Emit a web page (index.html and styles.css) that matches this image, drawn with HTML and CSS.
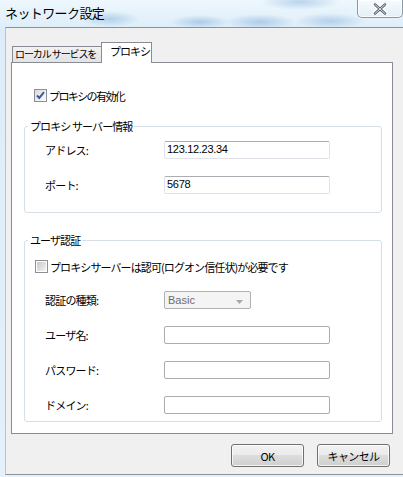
FILE: index.html
```html
<!DOCTYPE html>
<html lang="ja">
<head>
<meta charset="utf-8">
<link rel="stylesheet" href="styles.css">
</head>
<body>
<div class="window">
  <div class="titlebar">
    <div class="title">ネットワーク設定</div>
    <div class="close">
      <svg width="18" height="12" viewBox="0 0 18 12">
        <path d="M4 1.5 L14 10.5 M14 1.5 L4 10.5" stroke="#ffffff" stroke-width="5" stroke-linecap="round"/>
        <path d="M4 1.5 L14 10.5 M14 1.5 L4 10.5" stroke="#5a6470" stroke-width="2.6" stroke-linecap="round"/>
        <path d="M4 1.5 L14 10.5 M14 1.5 L4 10.5" stroke="#e8ecf0" stroke-width="0.9" stroke-linecap="round"/>
      </svg>
    </div>
  </div>
  <div class="client">
    <div class="tabs">
      <div class="tab">ローカル サービスを</div>
      <div class="tab active">プロキシ</div>
    </div>
    <div class="panel">
      <label class="check top-check">
        <svg class="box" width="13" height="13" viewBox="0 0 13 13">
          <defs><linearGradient id="g1" x1="0" y1="0" x2="1" y2="1"><stop offset="0" stop-color="#d8d8d8"/><stop offset="1" stop-color="#ffffff"/></linearGradient></defs>
          <rect x="0.5" y="0.5" width="12" height="12" fill="url(#g1)" stroke="#8a8f98"/>
          <path d="M3 6.5 L5.3 9 L10 3.2" fill="none" stroke="#3f5aa0" stroke-width="2"/>
        </svg>
        <span>プロキシの有効化</span>
      </label>
      <fieldset class="group g1">
        <legend>プロキシ サーバー情報</legend>
        <div class="row"><span class="lbl">アドレス:</span><div class="input">123.12.23.34</div></div>
        <div class="row"><span class="lbl">ポート:</span><div class="input">5678</div></div>
      </fieldset>
      <fieldset class="group g2">
        <legend>ユーザ認証</legend>
        <label class="check inner-check">
          <svg class="box" width="13" height="13" viewBox="0 0 13 13">
            <defs><linearGradient id="g2" x1="0" y1="0" x2="1" y2="1"><stop offset="0" stop-color="#c8c8c8"/><stop offset="1" stop-color="#f4f4f4"/></linearGradient></defs>
            <rect x="0.5" y="0.5" width="12" height="12" fill="#ffffff" stroke="#8a8f98"/>
            <rect x="2" y="2" width="9" height="9" fill="url(#g2)"/>
          </svg>
          <span>プロキシサーバーは認可(ログオン信任状)が必要です</span>
        </label>
        <div class="row"><span class="lbl">認証の種類:</span>
          <div class="select">Basic
            <svg class="arrow" width="7" height="4" viewBox="0 0 7 4"><path d="M0 0 H7 L3.5 4 Z" fill="#a8a8a8"/></svg>
          </div>
        </div>
        <div class="row"><span class="lbl">ユーザ名:</span><div class="input plain"></div></div>
        <div class="row"><span class="lbl">パスワード:</span><div class="input plain"></div></div>
        <div class="row"><span class="lbl">ドメイン:</span><div class="input plain"></div></div>
      </fieldset>
    </div>
    <div class="footer">
      <button class="btn">OK</button>
      <button class="btn">キャンセル</button>
    </div>
  </div>
</div>
</body>
</html>
```
FILE: styles.css
```css
* { box-sizing: border-box; }
html, body {
  margin: 0;
  padding: 0;
}
body {
  width: 403px;
  height: 477px;
  overflow: hidden;
  background: #e2f1fb;
  font-family: "Noto Sans CJK JP", "Noto Sans", sans-serif;
  font-size: 11px;
  color: #000;
}
.window {
  display: flex;
  flex-direction: column;
  height: 477px;
  background:
    radial-gradient(ellipse 30px 8px at 110px 19px, rgba(120,170,215,0.45), rgba(120,170,215,0)),
    radial-gradient(ellipse 30px 7px at 200px 22px, rgba(110,160,210,0.45), rgba(110,160,210,0)),
    radial-gradient(ellipse 35px 8px at 260px 22px, rgba(110,160,210,0.45), rgba(110,160,210,0)),
    radial-gradient(ellipse 35px 8px at 330px 21px, rgba(110,160,210,0.4), rgba(110,160,210,0)),
    radial-gradient(ellipse 40px 8px at 300px 2px, rgba(120,170,215,0.45), rgba(120,170,215,0)),
    linear-gradient(#eef7fd, #dcedf9 30px, #e2f1fb);
}
.titlebar {
  height: 27px;
  display: flex;
  justify-content: space-between;
  align-items: flex-start;
  flex-shrink: 0;
}
.title {
  font-size: 13px;
  line-height: 16px;
  padding: 5px 0 0 5px;
  letter-spacing: -0.6px;
  color: #000;
}
.close {
  width: 46px;
  height: 18px;
  border: 1px solid #8b97a5;
  border-top: none;
  border-radius: 0 0 5px 5px;
  background: linear-gradient(rgba(255,255,255,0.5), rgba(225,236,246,0.5));
  display: flex;
  align-items: center;
  justify-content: center;
  box-shadow: inset 0 0 0 1px rgba(255,255,255,0.7);
}
.client {
  margin-left: 5px;
  height: 448px;
  background: #f0f0f0;
  border-top: 1px solid #8e9296;
  border-left: 1px solid #b9c4cf;
  border-bottom: 1px solid #8e9296;
  padding: 14px 0 0 5px;
  display: flex;
  flex-direction: column;
}
.tabs {
  display: flex;
  align-items: flex-end;
  height: 20px;
  padding-left: 1px;
  position: relative;
  z-index: 1;
}
.tab {
  height: 16px;
  line-height: 14px;
  padding: 0 0 0 2px;
  border: 1px solid #898c95;
  border-bottom: none;
  background: linear-gradient(#f2f2f2, #e3e3e3);
  font-size: 10px;
  letter-spacing: -1.1px;
  white-space: nowrap;
  width: 90px;
  overflow: hidden;
}
.tab.active {
  height: 21px;
  width: 51px;
  background: #fff;
  margin-left: -1px;
  margin-bottom: -1px;
  padding: 1px 0 0 8px;
  line-height: 14px;
  font-size: 11px;
  letter-spacing: -1px;
}
.panel {
  width: 382px;
  height: 372px;
  background: #fff;
  border: 1px solid #898c95;
  padding: 26px 10px 0 12px;
  display: flex;
  flex-direction: column;
}
.check {
  display: flex;
  align-items: center;
  gap: 2px;
  height: 13px;
  white-space: nowrap;
  letter-spacing: -0.9px;
}
.top-check { letter-spacing: -1.6px; }
.check .box { flex-shrink: 0; }
.top-check { margin-left: 10px; }
.group {
  margin: 0;
  padding: 0;
  border: 1px solid #d5dfe5;
  border-radius: 3px;
  min-width: 0;
}
.group legend {
  margin-left: 3px;
  padding: 0 2px 0 2px;
  line-height: 12px;
  letter-spacing: -0.9px;
  white-space: nowrap;
}
.g1 {
  margin-top: 18px;
  padding: 9px 0 18px 0;
  display: flex;
  flex-direction: column;
  gap: 17px;
  height: 93px;
}
.g2 {
  margin-top: 21px;
  padding: 14px 0 0 0;
  height: 188px;
}
.inner-check { margin-left: 10px; margin-bottom: 18px; }
.row {
  display: flex;
  align-items: center;
  height: 18px;
  padding-left: 20px;
}
.g2 .row + .row { margin-top: 17px; }
.lbl {
  width: 119px;
  flex-shrink: 0;
  letter-spacing: -0.8px;
  white-space: nowrap;
}
.input {
  width: 166px;
  height: 18px;
  border: 1px solid #e2e3ea;
  border-top-color: #abadb3;
  border-radius: 2px;
  background: #fff;
  line-height: 15px;
  padding-left: 2px;
  font-family: "Liberation Sans", Arial, sans-serif;
  font-size: 11px;
  letter-spacing: -0.3px;
}
.input.plain {
  border: 1px solid #acacac;
}
.select {
  width: 87px;
  height: 18px;
  border: 1px solid #adb2b5;
  border-radius: 2px;
  background: #f4f4f4;
  color: #6d6d6d;
  font-family: "Liberation Sans", Arial, sans-serif;
  font-size: 11px;
  line-height: 15px;
  padding-left: 3px;
  display: flex;
  align-items: center;
  justify-content: space-between;
  padding-right: 7px;
}
.arrow { margin-top: 3px; }
.footer {
  display: flex;
  justify-content: flex-end;
  gap: 13px;
  padding: 10px 13px 0 0;
}
.btn {
  width: 73px;
  height: 23px;
  margin: 0;
  border: 1px solid #707070;
  border-radius: 3px;
  background: linear-gradient(#f2f2f2 0%, #ebebeb 45%, #dddddd 50%, #cfcfcf 100%);
  box-shadow: inset 0 0 0 1px rgba(255,255,255,0.75);
  font-family: "Noto Sans CJK JP", "Noto Sans", sans-serif;
  font-size: 11px;
  letter-spacing: -0.6px;
  color: #000;
  padding: 0;
}
```
